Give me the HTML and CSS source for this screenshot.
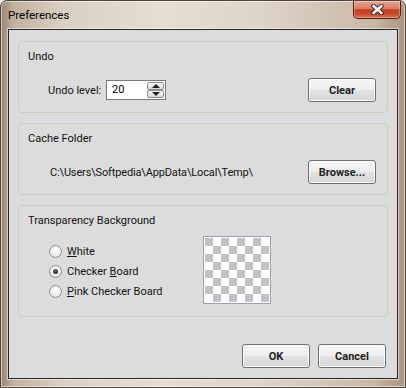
FILE: index.html
```html
<!DOCTYPE html>
<html lang="en">
<head>
    <meta charset="UTF-8">
    <title>Preferences</title>
    <link rel="stylesheet" href="styles.css">
</head>
<body>
    <div class="window">
        <div class="titlebar">
            <span class="title">Preferences</span>
            <div class="close">
                <svg width="13" height="11" viewBox="0 0 13 11">
                    <path d="M2.5 2 L10.5 9 M10.5 2 L2.5 9" stroke="#3a2420" stroke-width="4.4" stroke-linecap="round"/>
                    <path d="M2.5 2 L10.5 9 M10.5 2 L2.5 9" stroke="#fff" stroke-width="2.6" stroke-linecap="round"/>
                </svg>
            </div>
        </div>

        <div class="client">
            <div class="group">
                <div class="group-title">Undo</div>
                <div class="group-row indent-undo">
                    <span class="field-label">Undo level:</span>
                    <div class="spin">
                        <span class="spin-value">20</span>
                        <div class="spin-btns">
                            <div class="spin-btn"><span class="arrow-up"></span></div>
                            <div class="spin-btn"><span class="arrow-down"></span></div>
                        </div>
                    </div>
                    <div class="push">Clear</div>
                </div>
            </div>

            <div class="group">
                <div class="group-title">Cache Folder</div>
                <div class="group-row indent-path">
                    <span class="path">C:\Users\Softpedia\AppData\Local\Temp\</span>
                    <div class="push">Browse...</div>
                </div>
            </div>

            <div class="group last">
                <div class="group-title">Transparency Background</div>
                <div class="transp-row">
                    <div class="radios">
                        <div class="radio"><span class="radio-dot"></span><span><u>W</u>hite</span></div>
                        <div class="radio"><span class="radio-dot checked"></span><span>Checker <u>B</u>oard</span></div>
                        <div class="radio"><span class="radio-dot"></span><span><u>P</u>ink Checker Board</span></div>
                    </div>
                    <div class="preview"><div class="checker"></div></div>
                </div>
            </div>

            <div class="actions">
                <div class="push">OK</div>
                <div class="push">Cancel</div>
            </div>
        </div>
    </div>
</body>
</html>
```

FILE: styles.css
```css
body {
    margin: 0;
    background: #e9e9e9;
    font-family: Roboto, "Liberation Sans", sans-serif;
    font-size: 11px;
    color: #141414;
}
.window {
    width: 406px;
    height: 388px;
    box-sizing: border-box;
    border: 1px solid #4f443b;
    border-radius: 7px 7px 0 0;
    background: linear-gradient(90deg, #9a8473 0%, #c2b09f 3%, #dacfc3 15%, #e6ddd3 40%, #ded3c8 65%, #c9b8a8 92%, #a89482 100%);
    box-shadow: inset 0 0 0 1px rgba(255, 255, 255, 0.55);
    position: relative;
}
.titlebar {
    height: 28px;
    display: flex;
    align-items: center;
    padding-left: 7px;
}
.title {
    color: #000;
    font-size: 11.5px;
}
.close {
    position: absolute;
    top: 0;
    right: 4px;
    width: 48px;
    height: 18px;
    box-sizing: border-box;
    border: 1px solid #5b1d12;
    border-top: none;
    border-radius: 0 0 5px 5px;
    background: linear-gradient(#e8a795 0%, #db7a62 45%, #c63d20 52%, #c8452b 75%, #de7553 100%);
    box-shadow: inset 0 0 0 1px rgba(255, 255, 255, 0.3);
    display: flex;
    align-items: center;
    justify-content: center;
}
.client {
    margin-left: 7px;
    width: 390px;
    height: 350px;
    box-sizing: border-box;
    border: 1px solid #262626;
    background: #dcdcdc;
    padding: 11px 9px 9px 9px;
    box-shadow: 0 0 0 1px rgba(255, 255, 255, 0.5);
}
.group {
    border: 1px solid #cbcbbc;
    border-radius: 4px;
    padding: 7px 11px 10px 9px;
    margin-bottom: 10px;
}
.group.last {
    padding-bottom: 12px;
    margin-bottom: 27px;
}
.group-title {
    line-height: 16px;
}
.group-row {
    margin-top: 13px;
    height: 24px;
    display: flex;
    align-items: center;
}
.indent-undo { padding-left: 20px; }
.indent-path { padding-left: 22px; }
.path {
    letter-spacing: -0.15px;
}
.field-label {
    width: 58px;
}
.spin {
    width: 60px;
    height: 20px;
    box-sizing: border-box;
    border: 1px solid #777;
    background: #fff;
    display: flex;
}
.spin-value {
    flex: 1;
    padding-left: 5px;
    line-height: 18px;
    color: #000;
}
.spin-btns {
    width: 19px;
    padding: 1px;
    box-sizing: border-box;
    display: flex;
    flex-direction: column;
}
.spin-btn {
    flex: 1;
    border: 1px solid #8d8d8d;
    border-radius: 2px;
    background: linear-gradient(#f6f6f6, #d9d9d9);
    display: flex;
    align-items: center;
    justify-content: center;
}
.arrow-up {
    border-left: 4px solid transparent;
    border-right: 4px solid transparent;
    border-bottom: 4px solid #222;
}
.arrow-down {
    border-left: 4px solid transparent;
    border-right: 4px solid transparent;
    border-top: 4px solid #222;
}
.push {
    margin-left: auto;
    width: 68px;
    height: 24px;
    box-sizing: border-box;
    border: 1px solid #707070;
    border-radius: 3px;
    background: linear-gradient(#f7f7f7 0%, #eeeeee 48%, #e2e2e2 52%, #d6d6d6 100%);
    box-shadow: inset 0 0 0 1px #fbfbfb;
    display: flex;
    align-items: center;
    justify-content: center;
    font-weight: bold;
    color: #222;
}
.transp-row {
    margin-top: 7px;
    display: flex;
    align-items: flex-start;
}
.radios {
    margin-left: 21px;
    margin-top: 5px;
    width: 154px;
}
.radio {
    height: 20px;
    display: flex;
    align-items: center;
    gap: 5px;
}
.radio-dot {
    width: 13px;
    height: 13px;
    box-sizing: border-box;
    border-radius: 50%;
    border: 1px solid #8c8c8c;
    background: radial-gradient(circle at 50% 35%, #ffffff 0%, #ececec 60%, #d2d2d2 100%);
    display: flex;
    align-items: center;
    justify-content: center;
}
.radio-dot.checked::after {
    content: "";
    width: 5px;
    height: 5px;
    border-radius: 50%;
    background: radial-gradient(circle at 40% 35%, #6a6a6a, #111);
}
.preview {
    border: 1px solid #99a0b6;
    padding: 1px;
    background: #fff;
}
.checker {
    width: 64px;
    height: 64px;
    background-image: conic-gradient(#fff 25%, #c2c2c2 0 50%, #fff 0 75%, #c2c2c2 0);
    background-size: 16px 16px;
}
.actions {
    display: flex;
    justify-content: flex-end;
    gap: 8px;
    padding-right: 2px;
}
.actions .push {
    margin-left: 0;
}
```
